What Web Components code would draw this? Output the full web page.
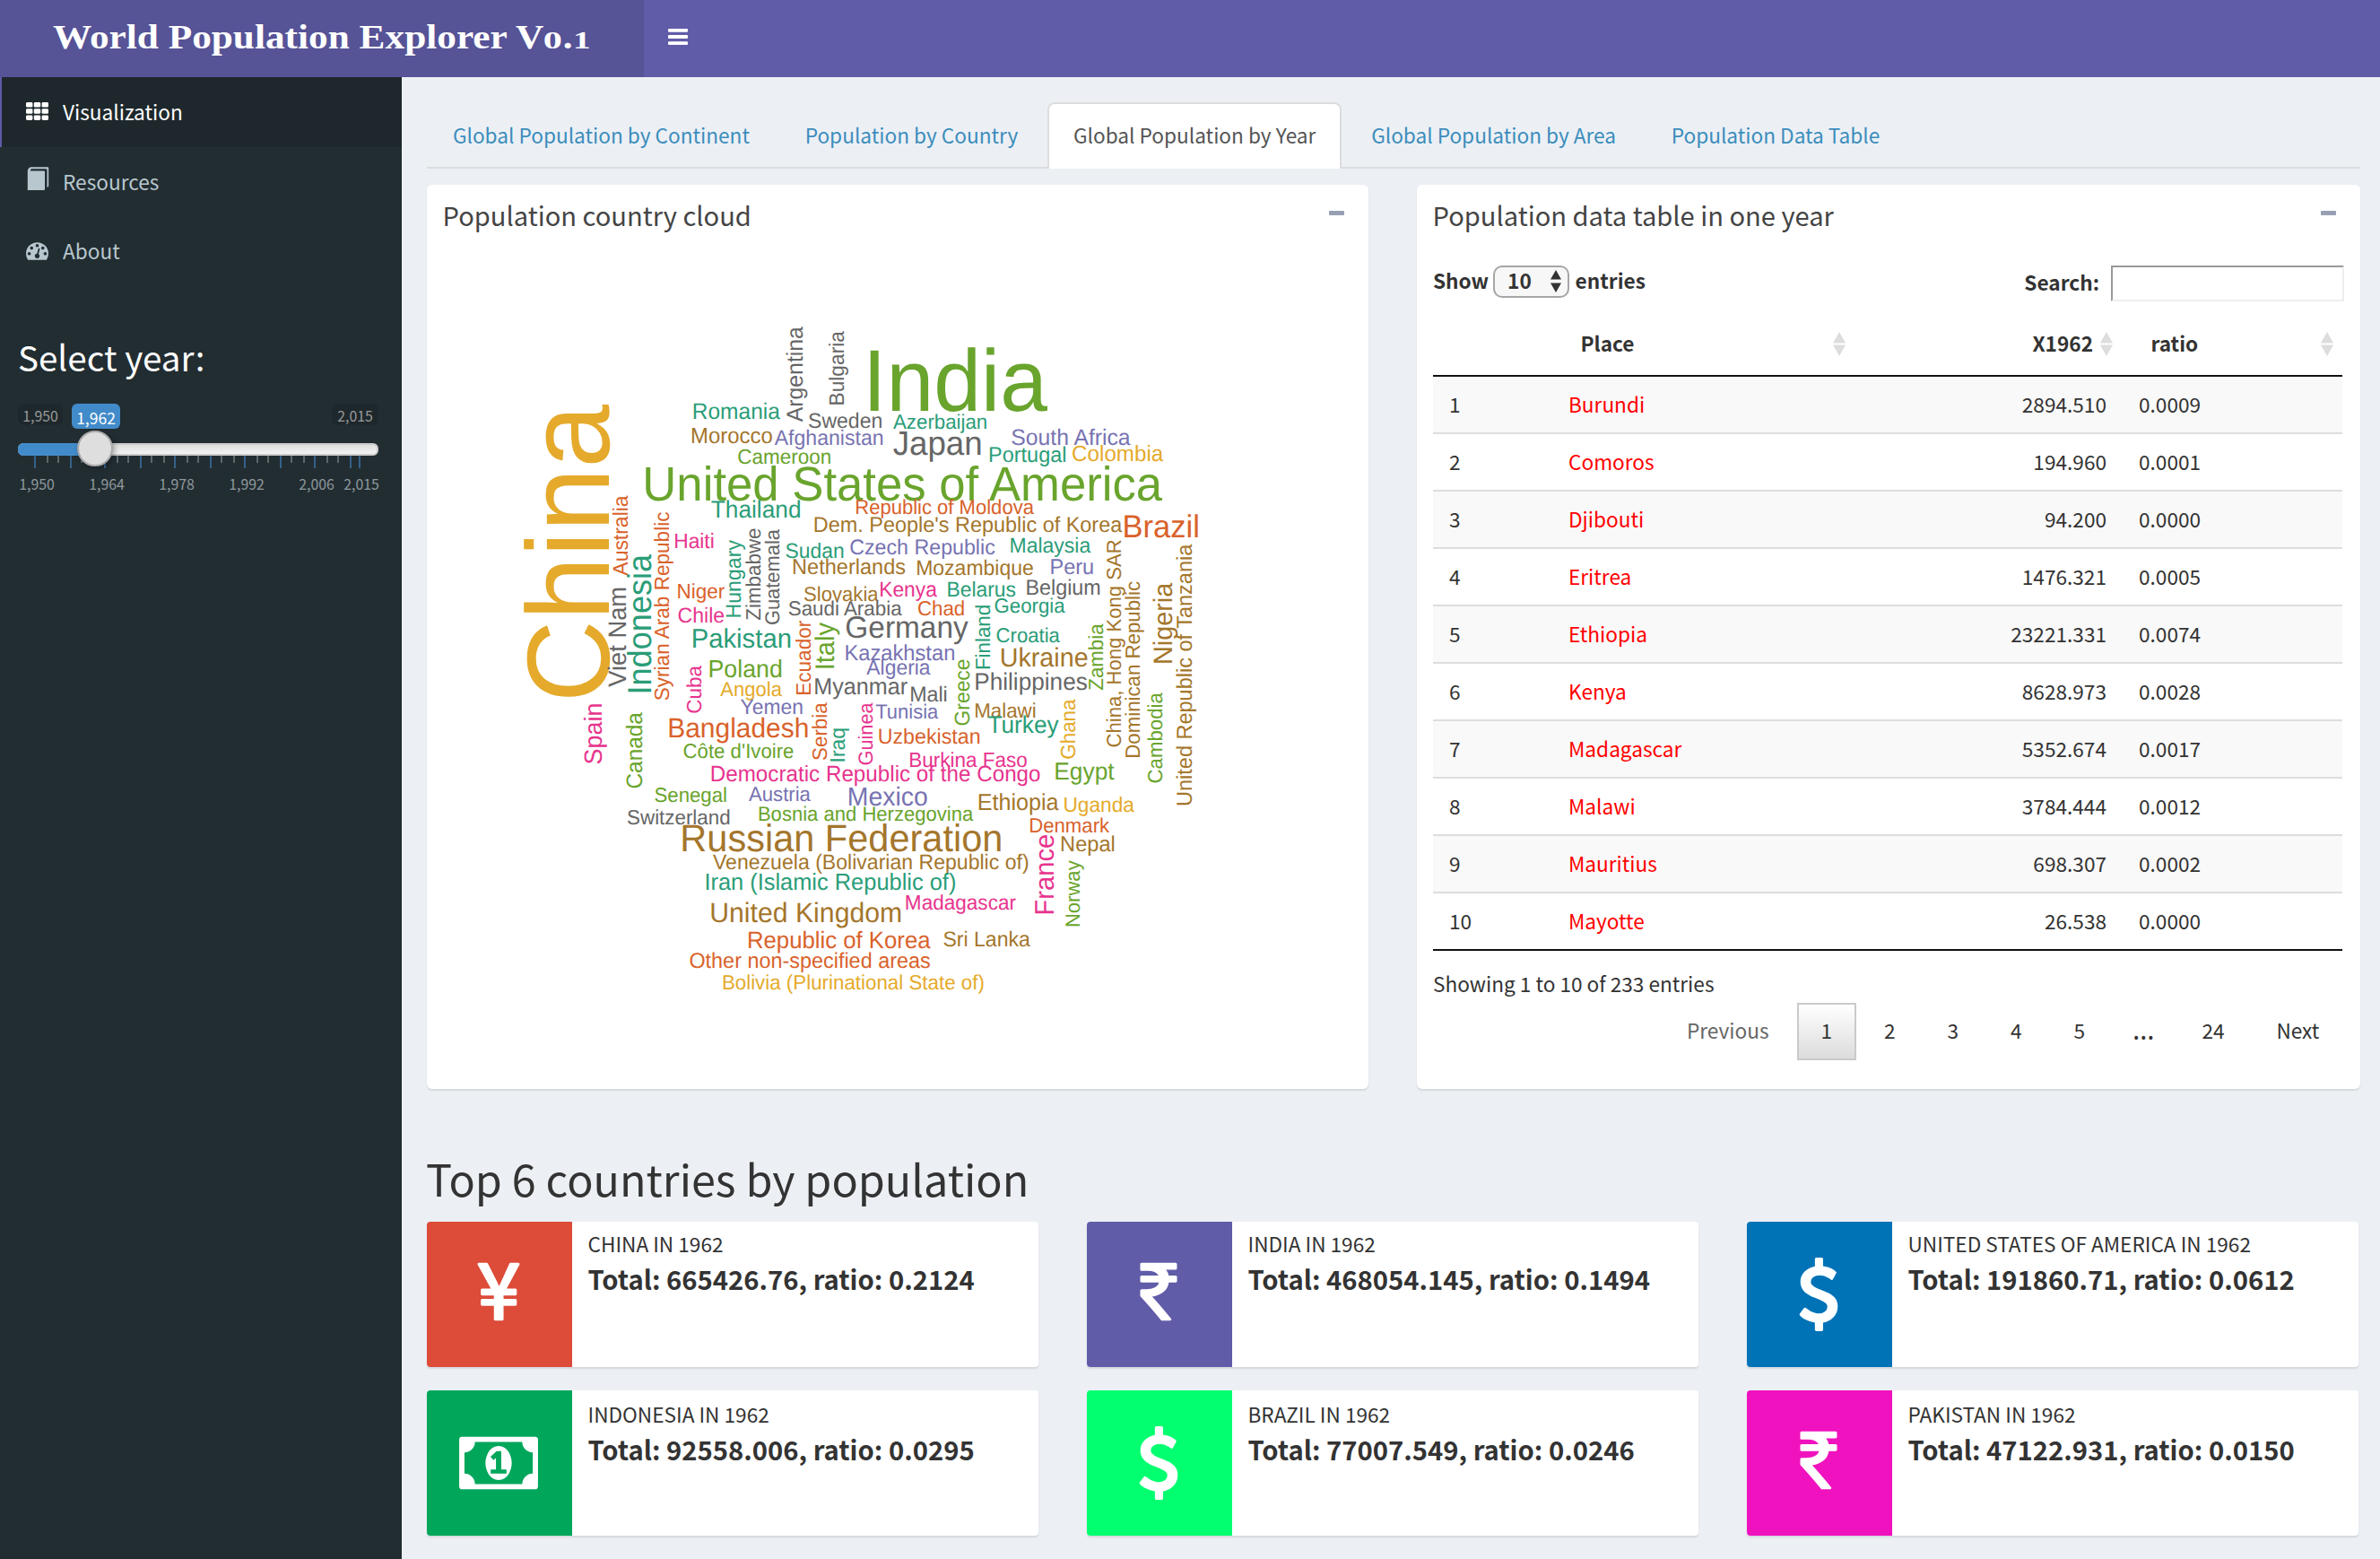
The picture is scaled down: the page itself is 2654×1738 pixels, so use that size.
<!DOCTYPE html>
<html lang="en">
<head>
<meta charset="utf-8">
<title>World Population Explorer</title>
<style>
html,body{margin:0;padding:0}
body{width:2654px;height:1738px;overflow:hidden;background:#ecf0f5;color:#333;font-family:"Noto Sans CJK SC","Noto Sans",sans-serif;font-size:22.64px;line-height:32px}
</style>
</head>
<body>
<world-app></world-app>
<script>
const define = (name, html, setup) => {
  const tpl = document.createElement('template');
  tpl.innerHTML = html;
  customElements.define(name, class extends HTMLElement {
    constructor() {
      super();
      this.attachShadow({ mode: 'open' }).appendChild(tpl.content.cloneNode(true));
    }
    connectedCallback() { if (setup) setup(this, this.shadowRoot); }
  });
};

const ICONS = {
  th: ['0 0 25 20', '<g><rect x="0" y="0" width="7.4" height="5.6" rx="1.4"/><rect x="8.8" y="0" width="7.4" height="5.6" rx="1.4"/><rect x="17.6" y="0" width="7.4" height="5.6" rx="1.4"/><rect x="0" y="7.2" width="7.4" height="5.6" rx="1.4"/><rect x="8.8" y="7.2" width="7.4" height="5.6" rx="1.4"/><rect x="17.6" y="7.2" width="7.4" height="5.6" rx="1.4"/><rect x="0" y="14.4" width="7.4" height="5.6" rx="1.4"/><rect x="8.8" y="14.4" width="7.4" height="5.6" rx="1.4"/><rect x="17.6" y="14.4" width="7.4" height="5.6" rx="1.4"/></g>'],
  book: ['0 0 25 26', '<path d="M1.8 26V4.6Q2.4 0.6 5.6 0.3H24q1.2 0 1.2 1.2V21q0 1.6-1.7 2V3.2q0-.9-.9-.9H6.4Q5 2.4 4.8 4.4H20q1 0 1 1V25q0 1-1 1Z"/>'],
  gauge: ['0 256 1792 1408', '<path d="M384 1152q0-53-37.5-90.5t-90.5-37.5-90.5 37.5-37.5 90.5 37.5 90.5 90.5 37.5 90.5-37.5 37.5-90.5zm192-448q0-53-37.5-90.5t-90.5-37.5-90.5 37.5-37.5 90.5 37.5 90.5 90.5 37.5 90.5-37.5 37.5-90.5zm428 481l101-382q6-26-7.5-48.5t-38.5-29.5-48 6.5-30 39.5l-101 382q-60 5-107 43.5t-63 98.5q-20 77 20 146t117 89 146-20 89-117q16-60-6-117t-72-91zm660-33q0-53-37.5-90.5t-90.5-37.5-90.5 37.5-37.5 90.5 37.5 90.5 90.5 37.5 90.5-37.5 37.5-90.5zm-640-640q0-53-37.5-90.5t-90.5-37.5-90.5 37.5-37.5 90.5 37.5 90.5 90.5 37.5 90.5-37.5 37.5-90.5zm448 192q0-53-37.5-90.5t-90.5-37.5-90.5 37.5-37.5 90.5 37.5 90.5 90.5 37.5 90.5-37.5 37.5-90.5zm320 448q0 261-141 483-19 29-54 29h-1402q-35 0-54-29-141-221-141-483 0-182 71-348t191-286 286-191 348-71 348 71 286 191 191 286 71 348z"/>'],
  yen: ['0 0 1792 1792', '<path d="M985.5 1536h-172q-13 0-22.5-9t-9.5-23v-330h-288q-13 0-22.5-9t-9.5-23v-103q0-13 9.5-22.5t22.5-9.5h288v-85h-288q-13 0-22.5-9t-9.5-23v-104q0-13 9.5-22.5t22.5-9.5h214l-321-578q-8-16 0-32 10-16 28-16h194q19 0 29 18l215 425q19 38 56 125 10-24 30.5-68t27.5-61l191-420q8-19 29-19h191q17 0 27 16 9 14 1 31l-313 579h215q13 0 22.5 9.5t9.5 22.5v104q0 14-9.5 23t-22.5 9h-290v85h290q13 0 22.5 9.5t9.5 22.5v103q0 14-9.5 23t-22.5 9h-290v330q0 13-9.5 22.5t-22.5 9.5z"/>'],
  rupee: ['0 0 1792 1792', '<path d="M1345 470v102q0 14-9 23t-23 9h-168q-23 144-129 234t-276 110q167 178 459 536 14 16 4 34-8 18-29 18h-195q-16 0-25-12-306-367-498-571-9-9-9-22v-127q0-13 9.5-22.5t22.5-9.5h112q132 0 212.5-43t102.5-125h-427q-14 0-23-9t-9-23v-102q0-14 9-23t23-9h413q-57-113-268-113h-145q-13 0-22.5-9.5t-9.5-22.5v-133q0-14 9-23t23-9h832q14 0 23 9t9 23v102q0 14-9 23t-23 9h-233q47 61 64 144h171q14 0 23 9t9 23z"/>'],
  dollar: ['0 0 1792 1792', '<path d="M1362 1185q0 153-99.5 263.5t-258.5 136.5v175q0 14-9 23t-23 9h-135q-13 0-22.5-9.5t-9.5-22.5v-175q-66-9-127.5-31t-101.5-44.5-74-48-46.5-37.5-17.5-18q-17-21-2-41l103-135q7-10 23-12 15-2 24 9l2 2q113 99 243 125 37 8 74 8 81 0 142.5-43t61.5-122q0-28-15-53t-33.5-42-58.5-37.5-66-32-80-32.5q-39-16-61.5-25t-61.5-26.5-62.5-31-56.5-35.5-53.5-42.5-43.5-49-35.5-58-21-66.5-8.5-78q0-138 98-242t255-134v-180q0-13 9.5-22.5t22.5-9.5h135q14 0 23 9t9 23v176q57 6 110.5 23t87 33.5 63.5 37.5 39 29 15 14q17 18 5 38l-81 146q-8 15-23 16-14 3-27-7-3-3-14.5-12t-39-26.5-58.5-32-74.5-26-85.5-11.5q-95 0-155 43t-60 111q0 26 8.5 48t29.5 41.5 39.5 33 56 31 60.5 27 70 27.5q53 20 81 31.5t76 35 75.5 42.5 62 50 53 63.5 31.5 76.5 13 94z"/>'],
  money: ['0 0 1792 1792', '<path d="M704 1152h384v-96h-128v-448h-114l-148 137 77 80q42-37 55-57h2v288h-128v96zm512-256q0 70-21 142t-59.5 134-101.5 101-138 39-138-39-101.5-101-59.5-134-21-142 21-142 59.5-134 101.5-101 138-39 138 39 101.5 101 59.5 134 21 142zm512 256v-512q-106 0-181-75t-75-181h-1152q0 106-75 181t-181 75v512q106 0 181 75t75 181h1152q0-106 75-181t181-75zm128-832v1152q0 26-19 45t-45 19h-1792q-26 0-45-19t-19-45v-1152q0-26 19-45t45-19h1792q26 0 45 19t19 45z"/>'],
  bars: ['0 0 22 18', '<g><rect width="22" height="3.8" rx="1"/><rect y="7.1" width="22" height="3.8" rx="1"/><rect y="14.2" width="22" height="3.8" rx="1"/></g>']
};

define('ui-icon', `<style>:host{display:block;flex:none}svg{display:block;width:100%;height:100%;overflow:visible;fill:currentColor;fill-rule:evenodd}</style><svg></svg>`, (el, root) => {
  const [box, body] = ICONS[el.getAttribute('name')];
  const svg = root.querySelector('svg');
  svg.setAttribute('viewBox', box);
  svg.innerHTML = body;
});

define('app-header', `<style>
:host{display:flex;height:86px;background:#605ca8;color:#fff}
.logo{width:718px;height:86px;background:#565397;box-sizing:border-box;padding-left:59px;font:bold 38px/82px "Liberation Serif",serif;white-space:nowrap}
.logo b{display:block;width:max-content;transform-origin:0 0;transform:scaleX(var(--stretch,1.16))}
small{display:inline-block;line-height:1;font-size:27.5px;transform-origin:0 0;transform:scaleX(1.35);margin-right:5px}
small.one{transform:scaleX(1.25);margin-right:2px}
ui-icon{width:22px;height:18px;margin:32px 0 0 27px}
</style><div class="logo"><b>World Population Explorer V<small>0</small>.<small class="one">1</small></b></div><ui-icon name="bars"></ui-icon>`, (el, root) => {
  const b = root.querySelector('b');
  b.style.setProperty('--stretch', 597 / b.offsetWidth);
});

define('nav-item', `<style>
:host{display:flex;height:77px;line-height:78px;color:#b8c7ce;padding-left:29px;box-sizing:border-box}
:host([active]){height:78px;background:#1e282c;color:#fff;border-left:2px solid #605ca8;padding-left:27px}
.i{width:41px;flex:none}
.i ui-icon{width:25px}
</style><div class="i"></div><span><slot></slot></span>`, (el, root) => {
  const i = document.createElement('ui-icon');
  i.setAttribute('name', el.getAttribute('icon'));
  i.style.height = el.getAttribute('h') + 'px';
  i.style.marginTop = el.getAttribute('top') + 'px';
  root.querySelector('.i').replaceChildren(i);
});

define('year-slider', `<style>
:host{display:block;padding:0 0 0 20px;width:402px}
h3{margin:0;font-weight:400;font-size:38.6px;line-height:58px;color:#fff}
.flags{display:flex;height:28px;margin-top:24px;align-items:flex-start;font-size:15.9px;line-height:24px;color:#999}
.flags span{background:rgba(0,0,0,.1);border-radius:6px;text-align:center;width:50px;line-height:28px;height:24px}
.flags .now{background:#428bca;color:#fff;width:54px;height:28px;font-size:17.5px;line-height:32px;margin-left:10px}
.flags .max{margin-left:auto;width:52px}
.bar{height:14px;margin-top:16px;box-sizing:border-box;border:2px solid #ccc;border-radius:6px;background:linear-gradient(#dedede,#fff 150%);display:flex}
.fill{width:86px;height:14px;margin:-2px;background:#428bca;border-radius:6px 0 0 6px;flex:none}
.knob{width:36px;height:36px;border:2px solid #aaa;border-radius:50%;background:#dedede;box-shadow:2px 2px 6px rgba(0,0,0,.3);margin:-16px 0 0 -18px;flex:none;z-index:1}
svg{display:block;height:16px;width:402px}
.labels{display:flex;font-size:15.9px;line-height:26px;height:26px;margin:3px 0 0 1px;color:#8f999d}
.labels span{width:40px;text-align:center;margin-right:38px;flex:none}
.labels span:nth-child(5){margin-right:10px}
</style><h3>Select year:</h3>
<div class="flags"><span>1,950</span><span class="now">1,962</span><span class="max">2,015</span></div>
<div class="bar"><div class="fill"></div><div class="knob"></div></div>
<svg></svg>
<div class="labels"><span>1,950</span><span>1,964</span><span>1,978</span><span>1,992</span><span>2,006</span><span>2,015</span></div>`, (el, root) => {
  const major = [39, 79, 117, 157, 195, 235, 273, 313, 351, 391, 401];
  const minor = [53, 65, 91, 103, 131, 143, 169, 183, 209, 221, 247, 261, 287, 299, 325, 339, 365, 377];
  root.querySelector('svg').innerHTML =
    minor.map(x => `<rect x="${x - 21}" width="2" height="8" fill="#5d6669"/>`).join('') +
    major.map(x => `<rect x="${x - 21}" width="2" height="14" fill="#34618a"/>`).join('');
});

define('side-bar', `<style>
:host{display:block;width:448px;height:1652px;background:#222d32;flex:none}
year-slider{margin-top:50px}
</style>
<nav-item active icon="th" top="28" h="20">Visualization</nav-item>
<nav-item icon="book" top="22" h="26">Resources</nav-item>
<nav-item icon="gauge" top="29" h="20">About</nav-item>
<year-slider></year-slider>`);

define('tab-item', `<style>
:host{display:block;box-sizing:border-box;height:74px;line-height:70px;border:2px solid transparent;border-bottom:0;padding:0 26.9px;margin-right:4px;color:#3c8dbc;white-space:nowrap}
:host([active]){background:#fff;color:#555;border-color:#ddd;border-radius:8px 8px 0 0}
</style><slot></slot>`);

define('tab-bar', `<style>
:host{display:flex;height:72px;border-bottom:2px solid #ddd}
</style><slot></slot>`);

define('box-card', `<style>
:host{display:flex;flex-direction:column;box-sizing:border-box;height:1008px;background:#fff;border-radius:6px;box-shadow:0 2px 2px rgba(0,0,0,.1)}
header{display:flex;justify-content:space-between;padding:0 27.5px 0 17.5px;height:67px;line-height:67px;font-size:29.1px;color:#444}
i{width:17px;height:5px;border-radius:1px;background:#97a0b3;margin-top:29px}
</style><header><span></span><i></i></header><slot></slot>`, (el, root) => {
  root.querySelector('span').textContent = el.getAttribute('heading');
});

const INK = { teal: '#2a9d78', orange: '#d9622b', purple: '#7773b2', pink: '#e7348e', green: '#69a42d', gold: '#e5aa2b', brown: '#a4762c', gray: '#666' };
/* Horizontal words: text, left edge, right edge, baseline, colour. */
const ACROSS = [
["Romania",638,927,381,"teal"],["India",1229,1822,354,"green"],["Sweden",1023,1266,410,"gray"],["Azerbaijan",1305,1617,413,"teal"],
["Morocco",633,900,462,"brown"],["Afghanistan",908,1270,467,"purple"],["Cameroon",787,1095,530,"green"],["Japan",1305,1598,501,"gray"],
["South Africa",1702,2099,467,"purple"],["Portugal",1629,1881,525,"teal"],["Colombia",1906,2209,521,"gold"],
["United States of America",477,2206,653,"green"],["Thailand",697,993,711,"teal"],["Republic of Moldova",1182,1776,699,"orange"],
["Dem. People's Republic of Korea",1043,2071,759,"brown"],["Brazil",2080,2324,776,"orange"],["Haiti",576,703,813,"pink"],
["Sudan",946,1138,846,"teal"],["Czech Republic",1162,1645,834,"purple"],["Malaysia",1699,1966,828,"teal"],["Netherlands",972,1345,901,"brown"],
["Mozambique",1386,1773,904,"brown"],["Peru",1834,1973,901,"purple"],["Niger",586,741,982,"orange"],["Slovakia",1008,1256,989,"brown"],
["Kenya",1263,1452,976,"pink"],["Belarus",1489,1714,976,"teal"],["Belgium",1753,1996,970,"gray"],["Chile",587,739,1062,"pink"],
["Saudi Arabia",956,1334,1039,"gray"],["Chad",1389,1542,1039,"orange"],["Georgia",1646,1880,1029,"teal"],["Pakistan",636,961,1147,"teal"],
["Germany",1149,1556,1112,"gray"],["Croatia",1652,1863,1127,"teal"],["Kazakhstan",1147,1509,1187,"purple"],["Algeria",1216,1430,1235,"purple"],
["Ukraine",1667,1955,1209,"brown"],["Poland",692,931,1244,"green"],["Angola",727,933,1309,"gold"],["Myanmar",1045,1352,1301,"gray"],
["Mali",1365,1483,1325,"gray"],["Philippines",1582,1953,1286,"gray"],["Yemen",795,1001,1369,"purple"],["Tunisia",1247,1456,1382,"purple"],
["Malawi",1581,1780,1379,"brown"],["Bangladesh",557,1019,1445,"orange"],["Turkey",1623,1859,1432,"teal"],["Côte d'Ivoire",605,971,1514,"green"],
["Uzbekistan",1258,1594,1466,"orange"],["Burkina Faso",1362,1752,1544,"pink"],["Democratic Republic of the Congo",698,1796,1594,"pink"],
["Egypt",1849,2045,1587,"green"],["Senegal",508,746,1661,"green"],["Austria",822,1029,1658,"purple"],["Mexico",1158,1418,1673,"purple"],
["Ethiopia",1592,1859,1688,"brown"],["Uganda",1878,2112,1696,"gold"],["Switzerland",417,757,1736,"gray"],["Bosnia and Herzegovina",857,1573,1724,"green"],
["Russian Federation",602,1665,1827,"brown"],["Denmark",1764,2029,1763,"orange"],["Nepal",1869,2044,1826,"brown"],
["Venezuela (Bolivarian Republic of)",702,1756,1887,"brown"],["Iran (Islamic Republic of)",680,1512,1955,"teal"],["United Kingdom",697,1330,2063,"brown"],
["Madagascar",1349,1715,2022,"pink"],["Republic of Korea",822,1430,2151,"orange"],["Sri Lanka",1474,1764,2145,"brown"],
["Other non-specified areas",625,1428,2216,"orange"],["Bolivia (Plurinational State of)",737,1607,2289,"gold"]];
/* Upright words: text, top edge, bottom edge, x of the baseline, colour. */
const UPRIGHT = [
["Argentina",72,391,1002,"gray"],["Bulgaria",87,332,1140,"gray"],["China",332,1311,354,"gold"],["Australia",637,905,417,"orange"],
["Viet Nam",947,1277,412,"gray"],["Indonesia",833,1294,496,"teal"],["Syrian Arab Republic",693,1321,556,"orange"],["Hungary",786,1043,795,"teal"],
["Zimbabwe",748,1053,861,"gray"],["Guatemala",750,1068,925,"gray"],["Ecuador",1056,1302,1028,"orange"],["Italy",1062,1214,1108,"green"],
["Finland",1005,1216,1628,"teal"],["Zambia",1066,1287,2007,"green"],["China, Hong Kong SAR",787,1477,2066,"brown"],
["Dominican Republic",925,1512,2129,"brown"],["Nigeria",929,1196,2237,"brown"],["United Republic of Tanzania",800,1672,2303,"brown"],
["Cuba",1206,1364,662,"pink"],["Greece",1186,1405,1559,"green"],["Serbia",1330,1521,1082,"orange"],["Iraq",1417,1525,1144,"teal"],
["Guinea",1330,1537,1235,"pink"],["Ghana",1318,1517,1913,"gold"],["Cambodia",1296,1597,2204,"green"],["Spain",1335,1534,331,"pink"],
["Canada",1362,1615,466,"green"],["France",1772,2035,1843,"pink"],["Norway",1858,2077,1928,"green"]];

define('word-cloud', `<style>
:host{display:block;padding:67px 0 0 84.5px}
svg{display:block;width:800px;height:790px;font-family:"Liberation Sans",Arial,sans-serif;text-rendering:geometricPrecision}
</style><svg viewBox="0 0 2400 2370"></svg>`, (el, root) => {
  const pen = document.createElement('canvas').getContext('2d');
  pen.font = '100px "Liberation Sans"';
  /* Ink extent of a word at 100px gives the size and advance that fill its span. */
  const fit = (word, span) => {
    const m = pen.measureText(word);
    const k = span / (m.actualBoundingBoxRight + m.actualBoundingBoxLeft);
    return [m.actualBoundingBoxLeft * k, `font-size="${k * 103}" textLength="${m.width * k}" lengthAdjust="spacingAndGlyphs"`];
  };
  root.querySelector('svg').innerHTML =
    ACROSS.map(([t, a, b, y, c]) => {
      const [dx, attrs] = fit(t, b - a);
      return `<text x="${a + dx}" y="${y}" ${attrs} fill="${INK[c]}">${t}</text>`;
    }).join('') +
    UPRIGHT.map(([t, a, b, x, c]) => {
      const [dx, attrs] = fit(t, b - a);
      return `<text transform="translate(${x} ${b - dx}) rotate(-90)" ${attrs} fill="${INK[c]}">${t}</text>`;
    }).join('');
});

define('sort-mark', `<style>:host{display:block;width:14px;height:27px}svg{display:block}</style><svg width="14" height="27" fill="#ddd"><path d="M7 0l7 12.4H0zM0 14.6h14L7 27z"/></svg>`);

define('data-table', `<style>
:host{display:block;padding:0 20px 0 18px}
.top{display:flex;align-items:flex-start;margin-top:23px;height:40px;font-weight:700;line-height:34px}
.sel{display:flex;align-items:center;justify-content:space-between;box-sizing:border-box;width:85px;height:36px;border:2px solid #a6a6a6;border-radius:10px;background:#f7f7f7;margin:0 7px 0 4.5px;padding:0 7px 2px 14.5px}
.sel svg{margin-top:1px}
.s{margin-left:auto;line-height:38px}
.in{box-sizing:border-box;width:260px;height:40px;border:2px solid #eee;border-top-color:#999;border-left-color:#999;margin:0 -2px 0 13px}
.row{display:grid;grid-template-columns:133px 338px 298px 1fr;height:62px;line-height:62px;border-bottom:2px solid #ddd}
.row:nth-child(even){background:#f9f9f9}
.row:last-child{border-color:#111}
.row>*{padding:0 18px;white-space:nowrap}
.row :nth-child(2){color:red}
.row :nth-child(3){text-align:right}
.head{display:grid;grid-template-columns:133px 338px 298px 1fr;height:82px;border-bottom:2px solid #111;font-weight:700;line-height:64px;box-sizing:content-box}
.head div{display:flex;justify-content:space-between;padding:15px 11px 0 31.5px}
.head div:last-child{padding-right:10px}
.head sort-mark{margin-top:19px}
.head .r{justify-content:flex-end;gap:8px}
.info{height:58px;box-sizing:border-box;padding-top:10px;line-height:54px}
.pager{display:flex;justify-content:flex-end;margin-right:-1px;gap:4.5px}
.pager span{box-sizing:border-box;min-width:66px;height:64px;border:2px solid transparent;padding:0 24.7px;line-height:58px;text-align:center}
.pager .on{border-color:#cacaca;background:linear-gradient(#fff,#dcdcdc)}
.pager .off{color:#666}
.pager .gap{width:68px;padding:0;font-family:"Noto Sans",sans-serif;font-size:31px;line-height:55px}
</style>
<div class="top"><span>Show</span><div class="sel"><span>10</span><svg width="12" height="25" fill="#333"><path d="M6 0l6 10.5H0zM0 14.5h12L6 25z"/></svg></div><span>entries</span><span class="s">Search:</span><div class="in"></div></div>
<div class="table"><div class="head"><div></div><div>Place<sort-mark></sort-mark></div><div class="r">X1962<sort-mark></sort-mark></div><div>ratio<sort-mark></sort-mark></div></div></div>
<div class="info">Showing 1 to 10 of 233 entries</div>
<div class="pager"><span class="off">Previous</span><span class="on">1</span><span>2</span><span>3</span><span>4</span><span>5</span><span class="gap">…</span><span>24</span><span>Next</span></div>`, (el, root) => {
  const rows = [['Burundi', '2894.510', '0.0009'], ['Comoros', '194.960', '0.0001'], ['Djibouti', '94.200', '0.0000'], ['Eritrea', '1476.321', '0.0005'], ['Ethiopia', '23221.331', '0.0074'], ['Kenya', '8628.973', '0.0028'], ['Madagascar', '5352.674', '0.0017'], ['Malawi', '3784.444', '0.0012'], ['Mauritius', '698.307', '0.0002'], ['Mayotte', '26.538', '0.0000']];
  root.querySelector('.table').insertAdjacentHTML('beforeend', rows.map((r, i) => `<div class="row"><span>${i + 1}</span><span>${r[0]}</span><span>${r[1]}</span><span>${r[2]}</span></div>`).join(''));
});

define('info-box', `<style>
:host{display:flex;height:162px;background:#fff;border-radius:4px;overflow:hidden;box-shadow:0 2px 2px rgba(0,0,0,.1)}
.tile{width:162px;background:var(--tile);display:flex;align-items:center;justify-content:center;color:#fff;flex:none}
.tile ui-icon{width:82px;height:82px;margin-right:2px}
.text{padding:var(--drop,0) 0 0 17.5px;white-space:nowrap}
.name{height:48px;line-height:50px;text-transform:uppercase}
.value{font-weight:700;font-size:29.24px;line-height:30px}
</style><div class="tile"></div><div class="text"><div class="name"><slot></slot></div><div class="value"><slot name="value"></slot></div></div>`, (el, root) => {
  root.querySelector('.tile').innerHTML = `<ui-icon name="${el.getAttribute('icon')}"></ui-icon>`;
});

define('world-app', `<style>
:host{display:block}
.body{display:flex}
main{width:2156px;padding:28px 22px 0 28px}
.cards{display:grid;grid-template-columns:1050px 1052px;column-gap:54px;margin-top:18px}
h2{margin:60px 0 0 -1px;height:88px;font-weight:400;font-size:48.5px;line-height:78px}
.boxes{display:grid;grid-template-columns:repeat(3,682px);gap:26px 54px}
.low{--drop:2px}
</style>
<app-header></app-header>
<div class="body"><side-bar></side-bar>
<main>
<tab-bar><tab-item>Global Population by Continent</tab-item><tab-item>Population by Country</tab-item><tab-item active>Global Population by Year</tab-item><tab-item>Global Population by Area</tab-item><tab-item>Population Data Table</tab-item></tab-bar>
<div class="cards"><box-card heading="Population country cloud"><word-cloud></word-cloud></box-card><box-card heading="Population data table in one year"><data-table></data-table></box-card></div>
<h2>Top 6 countries by population</h2>
<div class="boxes">
<info-box icon="yen" style="--tile:#dd4b39">China in 1962<span slot="value">Total: 665426.76, ratio: 0.2124</span></info-box>
<info-box icon="rupee" style="--tile:#605ca8">India in 1962<span slot="value">Total: 468054.145, ratio: 0.1494</span></info-box>
<info-box icon="dollar" style="--tile:#0073b7">United States of America in 1962<span slot="value">Total: 191860.71, ratio: 0.0612</span></info-box>
<info-box class="low" icon="money" style="--tile:#00a65a">Indonesia in 1962<span slot="value">Total: 92558.006, ratio: 0.0295</span></info-box>
<info-box class="low" icon="dollar" style="--tile:#01ff70">Brazil in 1962<span slot="value">Total: 77007.549, ratio: 0.0246</span></info-box>
<info-box class="low" icon="rupee" style="--tile:#f012be">Pakistan in 1962<span slot="value">Total: 47122.931, ratio: 0.0150</span></info-box>
</div>
</main></div>`);
</script>
</body>
</html>
